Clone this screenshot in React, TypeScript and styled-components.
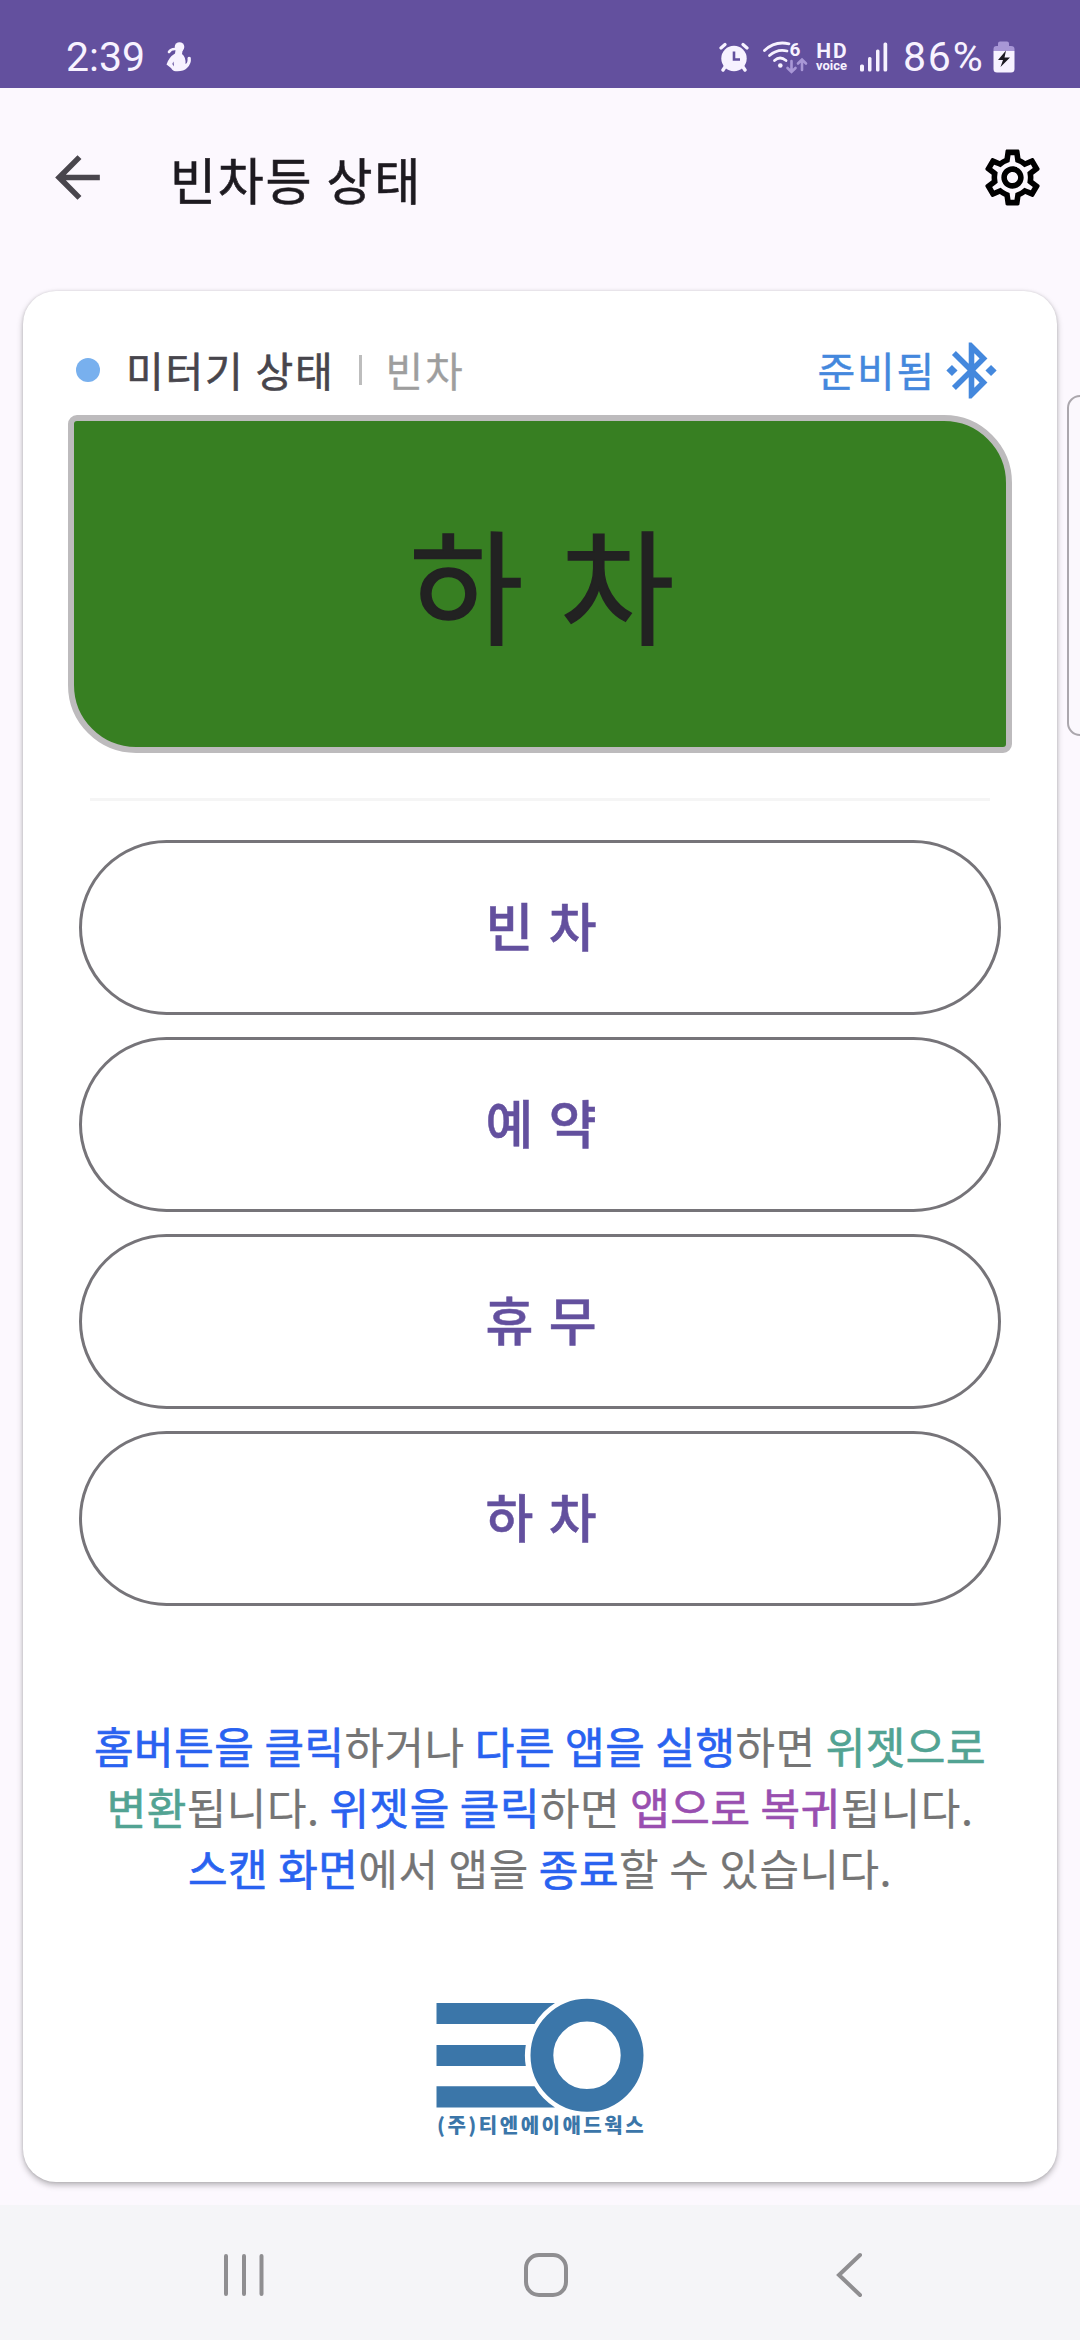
import React from "react";
import styled, { createGlobalStyle } from "styled-components";
import {
  MdArrowBack,
  MdBluetoothConnected,
  MdOutlineSettings,
} from "react-icons/md";

const GlobalStyle = createGlobalStyle`
  * { box-sizing: border-box; }
  body {
    margin: 0;
    background: #fcf8fe;
    font-family: "Noto Sans CJK KR", "Noto Sans", sans-serif;
  }
  button { font-family: inherit; background: none; border: 0; padding: 0; }
`;

const Screen = styled.div`
  position: relative;
  display: flex;
  flex-direction: column;
  width: 1080px;
  height: 2340px;
  overflow: hidden;
  background: #fcf8fe;
`;

const StatusBar = styled.header`
  display: flex;
  justify-content: space-between;
  height: 88px;
  padding: 35px 65px 0 66px;
  background: #63509e;
  color: #f7f2ff;
  font-family: Roboto, sans-serif;
`;

const StatusGroup = styled.div`
  display: flex;
  height: 44px;
  align-items: center;
`;

const Clock = styled.span`
  width: 80px;
  margin-right: 20px;
  font-size: 41px;
  line-height: 44px;
  white-space: nowrap;
`;

const StatusIcon = styled.svg<{ $gap: number }>`
  flex: none;
  display: block;
  margin-right: ${(p) => p.$gap}px;
`;

const HdVoice = styled.div`
  display: flex;
  flex-direction: column;
  align-items: center;
  width: 33px;
  margin-right: 12px;
  font-weight: 700;
`;

const HdLabel = styled.span`
  font-size: 21px;
  line-height: 17px;
  letter-spacing: 2px;
  margin-right: -2px;
`;

const VoiceLabel = styled.span`
  font-size: 13px;
  line-height: 12px;
`;

const BatteryPercent = styled.span`
  width: 84px;
  margin-right: 6px;
  font-size: 41px;
  line-height: 44px;
  letter-spacing: 1.8px;
  white-space: nowrap;
`;

const AppBar = styled.div`
  display: flex;
  align-items: center;
  height: 179px;
  padding: 0 34px 0 44px;
`;

const IconButton = styled.button<{ $color: string }>`
  display: flex;
  color: ${(p) => p.$color};
`;

const Title = styled.h1`
  flex: 1;
  margin: 0 0 0 59px;
  font-size: 50px;
  font-weight: 400;
  line-height: 72px;
  letter-spacing: 1.8px;
  color: #1d1a20;
  -webkit-text-stroke: 0.6px currentColor;
`;

const Card = styled.main`
  display: flex;
  flex-direction: column;
  height: 1891px;
  margin: 24px 23px 0;
  padding: 46px 45px 0;
  border-radius: 33px;
  background: #fff;
  box-shadow: 0 3px 6px rgba(0, 0, 0, 0.28), 0 0 3px rgba(0, 0, 0, 0.12);
`;

const MeterRow = styled.div`
  display: flex;
  align-items: center;
  height: 66px;
  padding: 0 7px 0 8px;
  font-size: 41px;
  line-height: 60px;
  letter-spacing: 1.8px;
`;

const Dot = styled.span`
  width: 24px;
  height: 24px;
  margin-right: 26px;
  border-radius: 50%;
  background: #78b0ee;
`;

const MeterLabel = styled.span`
  padding-bottom: 3px;
  color: #47454c;
  -webkit-text-stroke: 0.6px currentColor;
`;

const Separator = styled.span`
  width: 3px;
  height: 30px;
  margin: 0 24px;
  background: #bdbdbd;
`;

const MeterValue = styled.span`
  flex: 1;
  padding-bottom: 3px;
  color: #9e9e9e;
  -webkit-text-stroke: 0.3px currentColor;
`;

const Connection = styled.span`
  display: flex;
  align-items: center;
  gap: 2px;
  color: #4488dd;
`;

const ConnectionLabel = styled.span`
  padding-bottom: 3px;
  -webkit-text-stroke: 0.4px currentColor;
`;

const Display = styled.section`
  display: flex;
  align-items: center;
  justify-content: center;
  height: 338px;
  margin-top: 12px;
  padding: 0 0 7px 8px;
  border: 6px solid #bdbbbd;
  border-radius: 9px 68px 9px 68px;
  background: #377f22;
  color: #222;
  font-size: 124px;
  line-height: 180px;
  letter-spacing: 4.5px;
  -webkit-text-stroke: 1.6px currentColor;
`;

const Rule = styled.hr`
  width: 900px;
  height: 3px;
  margin: 45px auto 39px;
  border: 0;
  background: #f5f5f5;
`;

const ButtonList = styled.div`
  display: flex;
  flex-direction: column;
  gap: 22px;
  padding: 0 11px;
`;

const StateButton = styled.button`
  height: 175px;
  padding: 0 0 5px 4px;
  border: 3px solid #767479;
  border-radius: 88px;
  color: #63509e;
  font-size: 52px;
  font-weight: 500;
  line-height: 80px;
  letter-spacing: 1.8px;
  -webkit-text-stroke: 0.5px currentColor;
`;

const Hint = styled.p`
  margin: 109px -20px 0;
  color: #757575;
  font-size: 43px;
  line-height: 61.2px;
  letter-spacing: 0.5px;
  text-align: center;
  white-space: nowrap;
  -webkit-text-stroke: 0.2px currentColor;
`;

const Accent = styled.span<{ $color: string }>`
  color: ${(p) => p.$color};
  -webkit-text-stroke: 0.7px currentColor;
`;

const Brand = styled.footer`
  display: flex;
  flex-direction: column;
  align-items: center;
  margin-top: 99px;
`;

const BrandName = styled.span`
  margin: 1px 0 0 3px;
  color: #3b76a9;
  font-size: 20px;
  font-weight: 900;
  line-height: 24px;
  letter-spacing: 2.5px;
  white-space: nowrap;
`;

const NavBar = styled.nav`
  display: flex;
  align-items: center;
  justify-content: space-between;
  height: 135px;
  margin-top: auto;
  padding: 4px 215px 0 220px;
  background: #f5f5f8;
`;

const HomeIcon = styled.svg`
  margin-right: 9px;
`;

const EdgeHandle = styled.div`
  position: absolute;
  top: 395px;
  right: -14px;
  width: 27px;
  height: 341px;
  border: 2px solid #aba7ad;
  border-radius: 13px;
  background: #fbf8fd;
`;

const BLUE = "#2962f0";
const GREEN = "#52a393";
const PURPLE = "#994fb0";

const states = ["빈 차", "예 약", "휴 무", "하 차"];

function SeatedFigure() {
  return (
    <StatusIcon $gap={0} width="26" height="30" viewBox="0 0 26 30" fill="currentColor">
      <circle cx="13.5" cy="5" r="4.8" />
      <path d="M10 5 L17 6 L16 12 Q20 15 19.500 22 Q22 21 21.500 16 Q22.500 14 24.800 15.500 Q25.600 22 21 26 Q17 30 8 29 Q6 28 5 26 L0.500 22.500 Q3 15 9 11.500 Z" />
      <path d="M3 10 Q5 6.500 10 7" fill="none" stroke="currentColor" strokeWidth="2.600" strokeLinecap="round" />
      <path d="M7.500 19.500 L6.300 22 L8 24.500 Z" fill="#63509e" />
    </StatusIcon>
  );
}

function AlarmIcon() {
  return (
    <StatusIcon $gap={14} width="30" height="30" viewBox="0 0 30 30" fill="none" stroke="currentColor" strokeLinecap="round">
      <circle cx="15" cy="16.500" r="12.700" fill="currentColor" stroke="none" />
      <path d="M2 6 L6 2.500 M28 6 L24 2.500" strokeWidth="3.200" />
      <path d="M6 25 L4 28 M24 25 L26 28" strokeWidth="3.400" />
      <path d="M15 9.500 V17.500 H21" stroke="#63509e" strokeWidth="2.600" strokeLinecap="butt" />
    </StatusIcon>
  );
}

function WifiIcon() {
  return (
    <StatusIcon $gap={7} width="45" height="44" viewBox="0 -5 45 44" fill="none" stroke="currentColor" strokeLinecap="round">
      <path d="M1.500 10.500 Q12 0.500 26 3.800" strokeWidth="2.800" />
      <path d="M6.500 15.500 Q14.500 8.500 24 11" strokeWidth="2.800" />
      <path d="M11.500 20.500 Q17 15.500 23 20.500" strokeWidth="2.800" />
      <circle cx="17.300" cy="25.500" r="2.300" fill="currentColor" stroke="none" />
      <text x="26.500" y="15.500" fontSize="19" fontWeight="700" fill="currentColor" stroke="none">6</text>
      <path d="M28.500 21 V32 M24.500 28 L28.500 32 L32.500 28 M39 30 V20 M35 23.500 L39 19.500 L43 23.500" stroke="#a897d6" strokeWidth="2.600" />
    </StatusIcon>
  );
}

function SignalIcon() {
  return (
    <StatusIcon $gap={15} width="28" height="30" viewBox="0 0 28 30" fill="currentColor">
      <rect x="0" y="22.500" width="4" height="7" rx="1.500" />
      <rect x="8" y="15" width="3.500" height="14.500" rx="1.500" />
      <rect x="16" y="7.500" width="3.500" height="22" rx="1.500" />
      <rect x="23.500" y="0.500" width="3.700" height="29" rx="1.500" />
    </StatusIcon>
  );
}

function BatteryIcon() {
  return (
    <StatusIcon $gap={0} width="22" height="32" viewBox="0 0 22 32">
      <path d="M0.500 10 V8 Q0.500 5 3.500 5 H5 V2.500 Q5 0.500 7 0.500 H14 Q16 0.500 16 2.500 V5 H18 Q21.500 5 21.500 8 V10 Z" fill="#a897d6" />
      <path d="M0.500 10 H21.500 V28 Q21.500 31.500 18 31.500 H4 Q0.500 31.500 0.500 28 Z" fill="#f7f2ff" />
      <path d="M13 9.500 L5 19 H10 L7.500 26 L17 16.500 H11.500 Z" fill="#1c1a22" />
    </StatusIcon>
  );
}

function BrandMark() {
  return (
    <svg width="208" height="114" viewBox="0 0 208 114" fill="#3b76a9">
      <path d="M0.500 5 H119 A61.500 61.500 0 0 0 98.500 26 H0.500 Z" />
      <path d="M0.500 47 H89.800 A61.500 61.500 0 0 0 89.800 68 H0.500 Z" />
      <path d="M0.500 88.300 H98.500 A61.500 61.500 0 0 0 119 109.500 H0.500 Z" />
      <circle cx="151" cy="57.300" r="45.100" fill="none" stroke="#3b76a9" strokeWidth="22.800" />
    </svg>
  );
}

export default function App() {
  return (
    <Screen>
      <GlobalStyle />
      <StatusBar>
        <StatusGroup>
          <Clock>2:39</Clock>
          <SeatedFigure />
        </StatusGroup>
        <StatusGroup>
          <AlarmIcon />
          <WifiIcon />
          <HdVoice>
            <HdLabel>HD</HdLabel>
            <VoiceLabel>voice</VoiceLabel>
          </HdVoice>
          <SignalIcon />
          <BatteryPercent>86%</BatteryPercent>
          <BatteryIcon />
        </StatusGroup>
      </StatusBar>

      <AppBar>
        <IconButton $color="#49464d" aria-label="뒤로">
          <MdArrowBack size={67} />
        </IconButton>
        <Title>빈차등 상태</Title>
        <IconButton $color="#000" aria-label="설정">
          <MdOutlineSettings size={67} />
        </IconButton>
      </AppBar>

      <Card>
        <MeterRow>
          <Dot />
          <MeterLabel>미터기 상태</MeterLabel>
          <Separator />
          <MeterValue>빈차</MeterValue>
          <Connection>
            <ConnectionLabel>준비됨</ConnectionLabel>
            <MdBluetoothConnected size={67} />
          </Connection>
        </MeterRow>
        <Display>하 차</Display>
        <Rule />
        <ButtonList>
          {states.map((label) => (
            <StateButton key={label}>{label}</StateButton>
          ))}
        </ButtonList>
        <Hint>
          <Accent $color={BLUE}>홈버튼을 클릭</Accent>하거나{" "}
          <Accent $color={BLUE}>다른 앱을 실행</Accent>하면{" "}
          <Accent $color={GREEN}>위젯으로</Accent>
          <br />
          <Accent $color={GREEN}>변환</Accent>됩니다.{" "}
          <Accent $color={BLUE}>위젯을 클릭</Accent>하면{" "}
          <Accent $color={PURPLE}>앱으로 복귀</Accent>됩니다.
          <br />
          <Accent $color={BLUE}>스캔 화면</Accent>에서 앱을{" "}
          <Accent $color={BLUE}>종료</Accent>할 수 있습니다.
        </Hint>
        <Brand>
          <BrandMark />
          <BrandName>(주)티엔에이애드웍스</BrandName>
        </Brand>
      </Card>

      <NavBar>
        <svg width="46" height="48" viewBox="0 0 46 48" stroke="#8f8e91" strokeWidth="4" strokeLinecap="round">
          <path d="M6 5 V43 M24 5 V43 M41.500 5 V43" />
        </svg>
        <HomeIcon width="48" height="48" viewBox="0 0 48 48" fill="none" stroke="#8f8e91" strokeWidth="4">
          <rect x="4" y="4" width="40" height="40" rx="13" />
        </HomeIcon>
        <svg width="30" height="48" viewBox="0 0 30 48" fill="none" stroke="#8f8e91" strokeWidth="4" strokeLinecap="round">
          <path d="M25 4 L4 24 L25 44" />
        </svg>
      </NavBar>
      <EdgeHandle />
    </Screen>
  );
}
